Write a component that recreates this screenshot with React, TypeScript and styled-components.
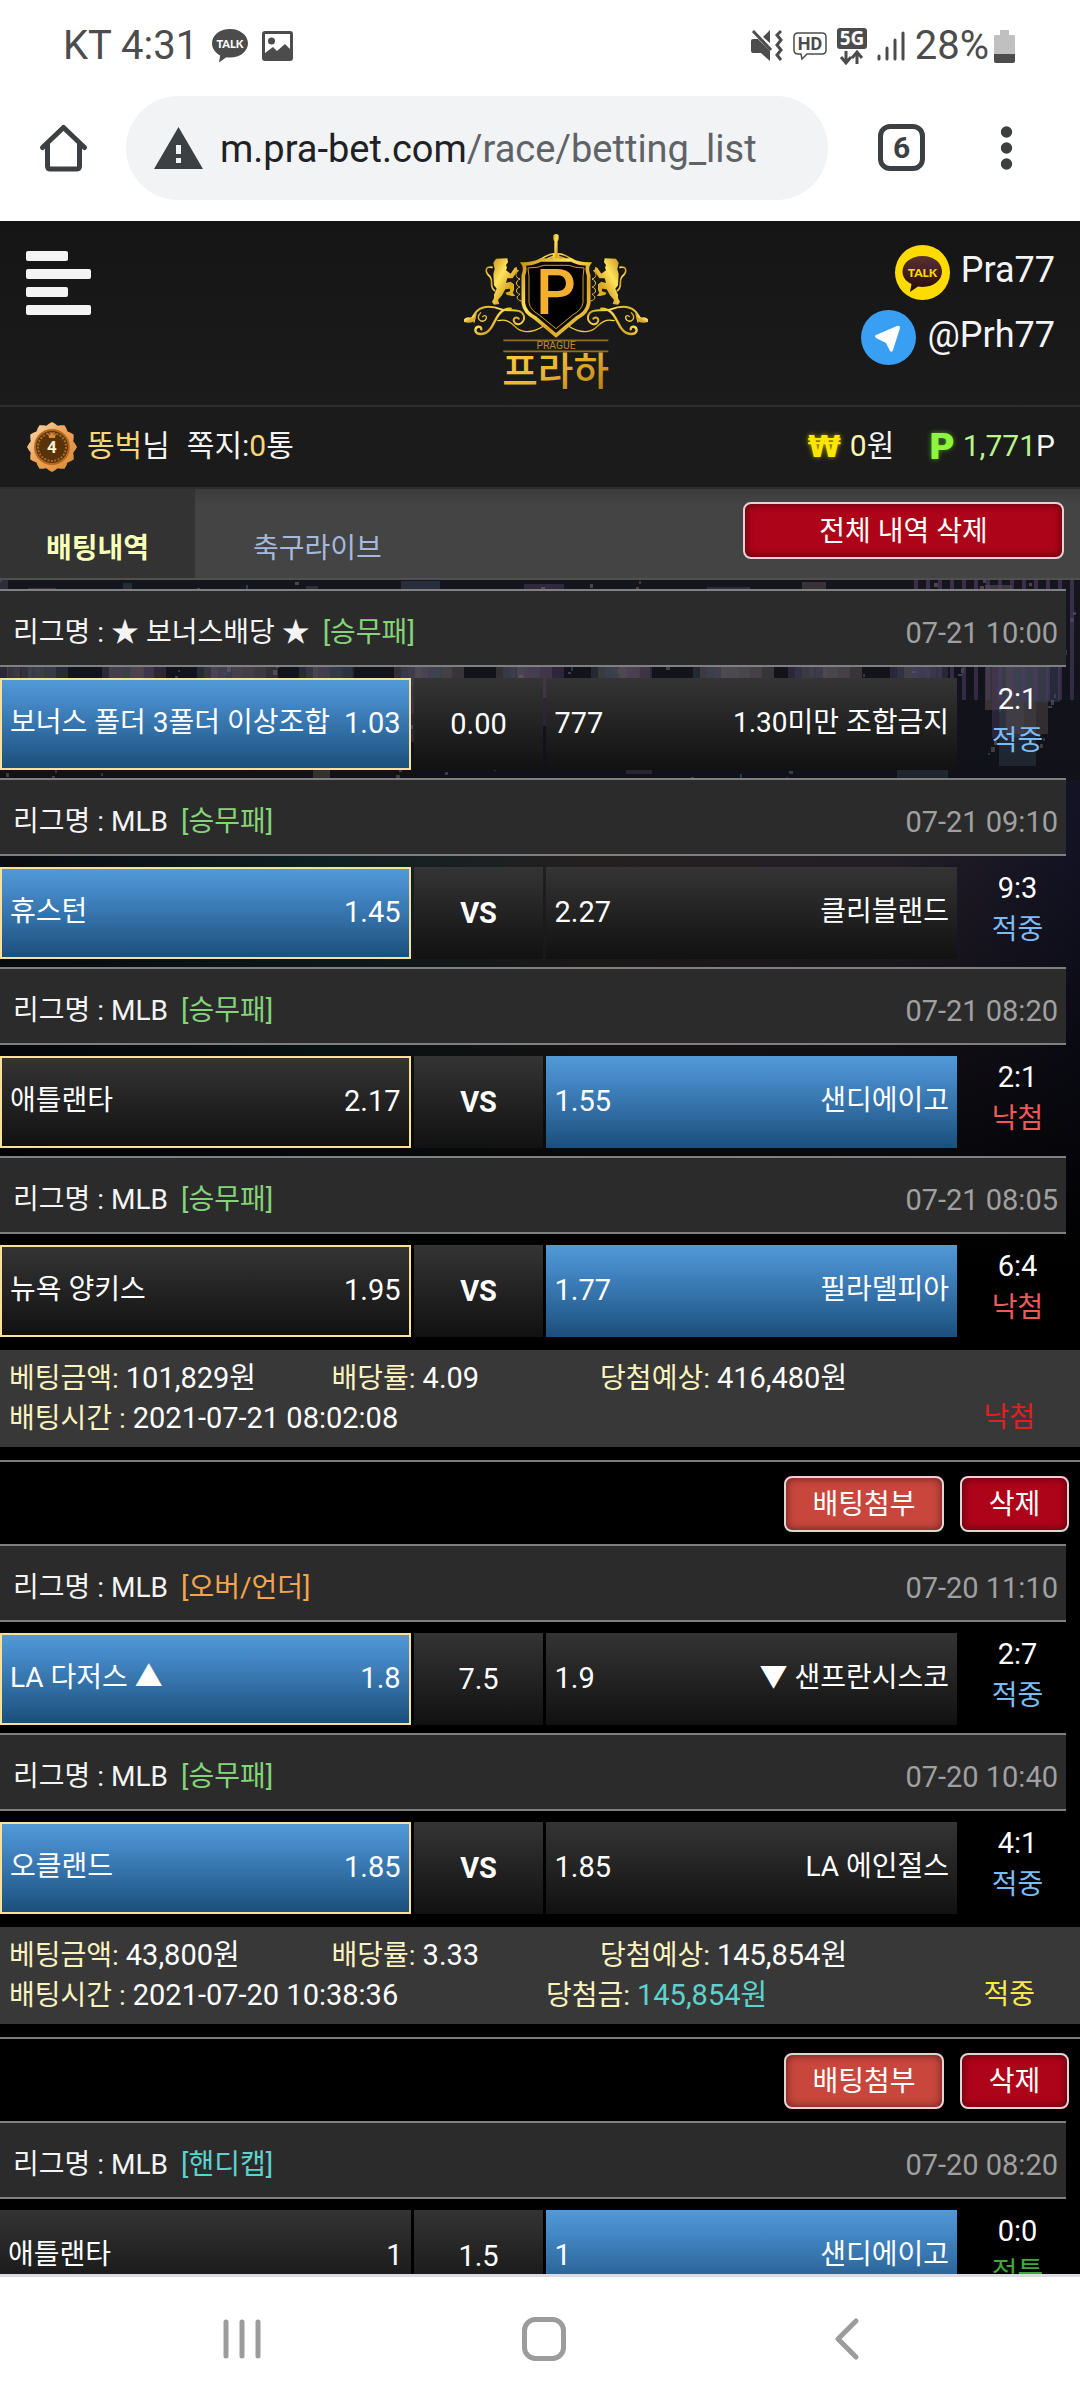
import React from "react";
import styled, { createGlobalStyle, css } from "styled-components";

const GlobalStyle = createGlobalStyle`
  * { box-sizing: border-box; }
  body { margin: 0; background: #fff; }
  body, button { font-family: Roboto, "Noto Sans CJK KR", sans-serif; }
  button { margin: 0; padding: 0; border: 0; background: none; cursor: pointer; }
  a { text-decoration: none; }
  svg { display: block; flex: none; overflow: visible; }
`;

/* ---------- shell ---------- */

const Screen = styled.div`
  display: flex;
  flex-direction: column;
  height: 100vh;
  overflow: hidden;
`;

const StatusBar = styled.div`
  display: flex;
  align-items: center;
  justify-content: space-between;
  height: 92px;
  padding: 0 65px 0 63px;
  color: #4c4c4c;
  font-size: 40px;
  line-height: 44px;
`;

const StatusGroup = styled.div<{ $gap: number }>`
  display: flex;
  align-items: center;
  gap: ${(p) => p.$gap}px;
`;

const BrowserBar = styled.div`
  display: flex;
  align-items: center;
  height: 129px;
  padding: 0 67px 18px 39px;
  color: #3c4043;
`;

const IconButton = styled.button`
  display: grid;
  place-items: center;
  flex: none;
  color: inherit;
`;

const Address = styled.button`
  display: flex;
  align-items: center;
  gap: 17px;
  flex: 1;
  height: 104px;
  margin: 0 50px 0 38px;
  padding: 0 28px;
  border-radius: 52px;
  background: #f1f3f4;
  color: #5f6368;
  font-size: 38px;
  line-height: 46px;
  text-align: left;
`;

const Url = styled.span`
  padding-top: 3px;
`;

const Host = styled.span`
  color: #202124;
`;

const TabCount = styled.button`
  flex: none;
  width: 47px;
  height: 47px;
  margin-right: 75px;
  border: 5px solid #3c4043;
  border-radius: 12px;
  color: #3c4043;
  font-size: 30px;
  font-weight: 700;
  line-height: 36px;
`;

const NavBar = styled.nav`
  display: flex;
  align-items: center;
  justify-content: space-between;
  flex: none;
  height: 126px;
  padding: 0 220px;
  border-top: 3px solid #dcdae2;
  background: #fff;
  color: #9c9c9c;
`;

/* ---------- site header ---------- */

const Page = styled.div`
  flex: 1;
  min-height: 0;
  overflow: hidden;
  background: #000;
  color: #fff;
`;

const SiteHeader = styled.header`
  display: grid;
  grid-template-columns: 518fr auto 482fr;
  align-items: start;
  height: 186px;
  border-bottom: 2px solid #2e2e2e;
  background: linear-gradient(#151515, #1b1b1b);
`;

const MenuButton = styled.button`
  display: flex;
  flex-direction: column;
  align-items: flex-start;
  gap: 8px;
  justify-self: start;
  margin: 30px 0 0 26px;
`;

const MenuLine = styled.span<{ $wide?: boolean }>`
  width: ${(p) => (p.$wide ? 65 : 42)}px;
  height: 10px;
  border-radius: 2px;
  background: #f4f4f4;
`;

const LogoLink = styled.a`
  margin-top: 11px;
`;

const Contacts = styled.div`
  display: flex;
  flex-direction: column;
  align-items: flex-end;
  gap: 10px;
  padding: 24px 25px 0 0;
`;

const Contact = styled.a`
  display: flex;
  gap: 11px;
  color: #f4f4f4;
  font-size: 36px;
  line-height: 50px;
`;

const UserBar = styled.div`
  display: flex;
  align-items: center;
  justify-content: space-between;
  height: 82px;
  padding: 0 25px 0 26px;
  border-bottom: 2px solid #2d2d2d;
  background: #1b1b1b;
  font-size: 30px;
  line-height: 40px;
  color: #f4f4f4;
`;

const UserPart = styled.div<{ $gap: number }>`
  display: flex;
  align-items: center;
  gap: ${(p) => p.$gap}px;
`;

const UserText = styled.span`
  padding-bottom: 2px;
`;

const Tint = styled.span<{ $c: string }>`
  color: ${(p) => p.$c};
`;

const WonMark = styled.b`
  color: #ffe600;
  font-family: "DejaVu Sans", sans-serif;
  text-shadow: 0 0 5px #a89a00;
  margin-right: 9px;
`;

const PointMark = styled.b`
  color: #8cf53c;
  font-family: "DejaVu Sans", sans-serif;
  font-size: 36px;
  text-shadow: 0 0 5px #4d9a1c;
  margin: 0 8px 0 34px;
`;

const TabBar = styled.div`
  display: flex;
  align-items: flex-start;
  height: 91px;
  border-bottom: 2px solid #505050;
  background: linear-gradient(#3c3c3c, #444 16px);
`;

const Tab = styled.a<{ $active?: boolean }>`
  height: 89px;
  padding: ${(p) => (p.$active ? "0 46px" : "0 58px")};
  background: ${(p) => (p.$active ? "#333" : "transparent")};
  color: ${(p) => (p.$active ? "#f7ffb8" : "#a6b9dc")};
  font-size: 28px;
  font-weight: ${(p) => (p.$active ? 700 : 400)};
  line-height: 120px;
`;

const redFace = css`
  padding-top: 2px;
  border: 2px solid #e3d3d6;
  border-radius: 8px;
  color: #fff;
  font-size: 28px;
  line-height: 40px;
  box-shadow: inset 0 0 8px rgba(0, 0, 0, 0.55);
`;

const ClearAll = styled.button`
  ${redFace}
  width: 321px;
  height: 57px;
  margin: 13px 16px 0 auto;
  background: #ae0419;
`;

/* ---------- bet list ---------- */

const List = styled.main`
  position: relative;
  padding-top: 9px;
`;

const Backdrop = styled.svg`
  position: absolute;
  top: 0;
  left: 0;
  width: 100%;
  height: 690px;
`;

const Slip = styled.section`
  position: relative;
`;

const SlipActions = styled.div`
  display: flex;
  justify-content: flex-end;
  gap: 16px;
  height: 84px;
  margin-top: 13px;
  padding: 14px 11px 0 0;
  border-top: 2px solid #7c7c7c;
`;

const SmallButton = styled.button<{ $attach?: boolean }>`
  ${redFace}
  width: ${(p) => (p.$attach ? 160 : 109)}px;
  height: 56px;
  background: ${(p) => (p.$attach ? "#c8463c" : "#ae0419")};
`;

const League = styled.div`
  display: flex;
  justify-content: space-between;
  height: 78px;
  margin-right: 14px;
  padding: 8px 8px 0 13px;
  border-top: 2px solid #808080;
  border-bottom: 2px solid #808080;
  background: #2b2b2b;
  color: #f4f4f4;
  font-size: 28px;
  line-height: 68px;
`;

const Kind = styled.span<{ $c: string }>`
  margin-left: 13px;
  color: ${(p) => p.$c};
`;

const When = styled.time`
  color: #a0a0a0;
  font-size: 29px;
`;

const Match = styled.div`
  display: grid;
  grid-template-columns: 411fr 130fr 411fr 120fr;
  gap: 3px;
  height: 92px;
  margin: 11px 0 8px;
  font-size: 28px;
`;

const Side = styled.div<{ $win?: boolean; $mine?: boolean }>`
  display: flex;
  justify-content: space-between;
  padding: 0 8px;
  border: ${(p) => (p.$mine ? "2px solid #fbe09a" : "0")};
  background: ${(p) =>
    p.$win
      ? "linear-gradient(#5199d8, #4488c6 25%, #1b4f7c)"
      : "linear-gradient(#343434, #111)"};
  line-height: ${(p) => (p.$mine ? 86 : 90)}px;
`;

const Figure = styled.span`
  font-size: 29px;
`;

const Middle = styled.div<{ $bold: boolean }>`
  background: linear-gradient(#343434, #111);
  font-size: 29px;
  font-weight: ${(p) => (p.$bold ? 700 : 400)};
  line-height: 92px;
  text-align: center;
`;

const Score = styled.div`
  display: flex;
  flex-direction: column;
  align-items: center;
  padding-right: 5px;
  line-height: 42px;
`;

const Summary = styled.div`
  height: 97px;
  margin-top: 13px;
  padding: 8px 9px 0;
  background: #383838;
  font-size: 28px;
  line-height: 40px;
`;

const SummaryRow = styled.div<{ $cols: string }>`
  display: grid;
  grid-template-columns: ${(p) => p.$cols};
  height: 40px;
  white-space: nowrap;
`;

const Verdict = styled.span<{ $c: string }>`
  justify-self: end;
  margin-right: 36px;
  color: ${(p) => p.$c};
`;

/* ---------- data ---------- */

const GREEN = "#84d478";
const ORANGE = "#f3a44c";
const CYAN = "#5ed2cf";
const HIT = "#7cbcf5";
const MISS = "#ee5a5a";

type Game = {
  league: string;
  kind: string;
  kindColor: string;
  at: string;
  home: [string, string];
  mid: string;
  away: [string, string];
  winner: "home" | "away";
  mine?: boolean;
  score: string;
  result: string;
  resultColor: string;
};

const game = (
  league: string, kind: string, kindColor: string, at: string,
  home: [string, string], mid: string, away: [string, string],
  winner: "home" | "away", score: string, result: string, resultColor: string, mine = true,
): Game => ({ league, kind, kindColor, at, home, mid, away, winner, mine, score, result, resultColor });

type Bet = {
  games: Game[];
  total?: { stake: string; odds: string; expected: string; time: string; paid?: string; verdict: string; color: string };
};

const bets: Bet[] = [
  {
    games: [
      game("★ 보너스배당 ★", "승무패", GREEN, "07-21 10:00", ["보너스 폴더 3폴더 이상조합", "1.03"], "0.00", ["777", "1.30미만 조합금지"], "home", "2:1", "적중", HIT),
      game("MLB", "승무패", GREEN, "07-21 09:10", ["휴스턴", "1.45"], "VS", ["2.27", "클리블랜드"], "home", "9:3", "적중", HIT),
      game("MLB", "승무패", GREEN, "07-21 08:20", ["애틀랜타", "2.17"], "VS", ["1.55", "샌디에이고"], "away", "2:1", "낙첨", MISS),
      game("MLB", "승무패", GREEN, "07-21 08:05", ["뉴욕 양키스", "1.95"], "VS", ["1.77", "필라델피아"], "away", "6:4", "낙첨", MISS),
    ],
    total: { stake: "101,829원", odds: "4.09", expected: "416,480원", time: "2021-07-21 08:02:08", verdict: "낙첨", color: "#e02020" },
  },
  {
    games: [
      game("MLB", "오버/언더", ORANGE, "07-20 11:10", ["LA 다저스 ▲", "1.8"], "7.5", ["1.9", "▼ 샌프란시스코"], "home", "2:7", "적중", HIT),
      game("MLB", "승무패", GREEN, "07-20 10:40", ["오클랜드", "1.85"], "VS", ["1.85", "LA 에인절스"], "home", "4:1", "적중", HIT),
    ],
    total: { stake: "43,800원", odds: "3.33", expected: "145,854원", time: "2021-07-20 10:38:36", paid: "145,854원", verdict: "적중", color: "#fbe84a" },
  },
  {
    games: [
      game("MLB", "핸디캡", CYAN, "07-20 08:20", ["애틀랜타", "1"], "1.5", ["1", "샌디에이고"], "away", "0:0", "적특", "#3fa83a", false),
    ],
  },
];

/* ---------- drawings ---------- */

const ChatIcon = () => (
  <svg width="36" height="34" viewBox="0 0 36 34">
    <path fill="currentColor" d="M18 0C8 0 0 6 0 14.300c0 5.200 3.300 9.700 8.200 12.200L7 33.500l7.300-5.200c1.200.2 2.400.3 3.700.3 10 0 18-6.300 18-14.300S28 0 18 0z" />
    <text x="18" y="19" textAnchor="middle" fontFamily="Lato, sans-serif" fontWeight="900" fontSize="11" fill="#fff">TALK</text>
  </svg>
);

const PhotoIcon = () => (
  <svg width="31" height="30" viewBox="0 0 31 30">
    <path fill="currentColor" fillRule="evenodd" d="M3 0h25a3 3 0 0 1 3 3v24a3 3 0 0 1-3 3H3a3 3 0 0 1-3-3V3a3 3 0 0 1 3-3zm0 3v19l8-6 4 4 8-7 5 5V3z" />
    <circle cx="9.500" cy="10" r="3.500" fill="currentColor" />
  </svg>
);

const MuteIcon = () => (
  <svg width="32" height="32" viewBox="0 0 32 32" fill="currentColor">
    <path d="M0 11q0-2 2-2h5l12 12v10l-9-8H2q-2 0-2-2zM12 7l7-7v13z" />
    <path d="M2 1l18 19M30 1l-4 4 4 5-4 5 4 5-4 5 4 5" fill="none" stroke="currentColor" strokeWidth="3" />
  </svg>
);

const HdIcon = () => (
  <svg width="34" height="28" viewBox="0 0 34 28">
    <path d="M5 1h24q4 0 4 4v13q0 4-4 4H14l-5 5-1-5H5q-4 0-4-4V5q0-4 4-4z" fill="none" stroke="currentColor" strokeWidth="1.500" />
    <text x="17" y="18" textAnchor="middle" fontFamily="Roboto, sans-serif" fontWeight="700" fontSize="18" fill="currentColor">HD</text>
  </svg>
);

const FiveGIcon = () => (
  <svg width="30" height="37" viewBox="0 0 30 37">
    <rect width="30" height="21" rx="3" fill="currentColor" />
    <text x="15" y="17" textAnchor="middle" fontFamily="Open Sans, sans-serif" fontWeight="700" fontSize="19" fill="#fff">5G</text>
    <path d="M9 23v11M4 29l5 6 5-6M20 36V24M15 30l5-6 5 6" fill="none" stroke="currentColor" strokeWidth="3" />
  </svg>
);

const SignalIcon = () => (
  <svg width="28" height="30" viewBox="0 0 28 30" stroke="currentColor" strokeWidth="3" strokeLinecap="round">
    <path d="M2 25v3M10 17v11M18 9v19M26 2v26" />
  </svg>
);

const BatteryIcon = () => (
  <svg width="21" height="33" viewBox="0 0 21 33">
    <path fill="#c0c0c0" d="M6 0h9v5h5q1 0 1 1v18H0V6q0-1 1-1h5z" />
    <path fill="currentColor" d="M0 24h21v7q0 2-2 2H2q-2 0-2-2z" />
  </svg>
);

const HomeIcon = () => (
  <svg width="49" height="48" viewBox="0 0 49 48" fill="none" stroke="currentColor" strokeWidth="5" strokeLinecap="round" strokeLinejoin="round">
    <path d="M3.500 23.500l21-20 21 20M8.500 20v22q0 3 3 3h26q3 0 3-3V20" />
  </svg>
);

const WarningIcon = () => (
  <svg width="49" height="42" viewBox="0 0 49 42">
    <path fill="#3c4043" d="M24.500 0L49 42H0z" />
    <path fill="#f1f3f4" d="M22 18h5v9h-5zM22 31h5v5h-5z" />
  </svg>
);

const DotsIcon = () => (
  <svg width="13" height="44" viewBox="0 0 13 44" fill="currentColor">
    <circle cx="6.500" cy="6" r="5.700" /><circle cx="6.500" cy="22" r="5.700" /><circle cx="6.500" cy="38" r="5.700" />
  </svg>
);

const KakaoIcon = () => (
  <svg width="55" height="55" viewBox="0 0 55 55">
    <defs>
      <linearGradient id="kk" x1="0" y1="0" x2="0" y2="1"><stop offset="0" stopColor="#5a3232" /><stop offset="1" stopColor="#260808" /></linearGradient>
    </defs>
    <circle cx="27.500" cy="27.500" r="27.500" fill="#fedc00" />
    <path fill="url(#kk)" d="M27.500 11C16 11 7.500 18 7.500 26.500c0 5.500 3.500 10 9 12.500L15 47l8-5.500c1.500.3 3 .4 4.500.4C39 42 47 35 47 26.500S39 11 27.500 11z" />
    <text x="27.500" y="32" textAnchor="middle" fontFamily="Lato, sans-serif" fontWeight="900" fontSize="12" fill="#fedc00">TALK</text>
  </svg>
);

const TelegramIcon = () => (
  <svg width="55" height="55" viewBox="0 0 55 55">
    <circle cx="27.500" cy="27.500" r="27.500" fill="#389ff2" />
    <path fill="#fff" d="M15 25q-2 1 0 3l10 5 4 8q2 2 3-1l7-22q0-3-3-2z" />
  </svg>
);

const MedalIcon = () => {
  const points = Array.from({ length: 48 }, (_, i) => {
    const a = (i / 48) * Math.PI * 2;
    const r = 23.500 + 1.500 * Math.cos(a * 12);
    return `${26 + r * Math.sin(a)},${26 - r * Math.cos(a)}`;
  }).join(" ");
  return (
    <svg width="52" height="52" viewBox="0 0 52 52">
      <defs>
        <linearGradient id="md" x1="0" y1="0" x2="1" y2="1"><stop offset="0" stopColor="#fbe0b8" /><stop offset=".45" stopColor="#eda45a" /><stop offset="1" stopColor="#d98630" /></linearGradient>
      </defs>
      <polygon points={points} fill="url(#md)" />
      <circle cx="26" cy="26" r="17" fill="#5a3208" stroke="#b06a20" strokeWidth="2" />
      <circle cx="26" cy="26" r="14" fill="none" stroke="#a86c2c" strokeWidth="2" strokeDasharray="2 1.500" />
      <path d="M22 12l2 2 2-3 2 3 2-2-1 5h-6z" fill="#d98a3a" />
      <text x="26" y="32" textAnchor="middle" fontFamily="Roboto, sans-serif" fontWeight="700" fontSize="17" fill="#fff0d0">4</text>
    </svg>
  );
};

/* One supporter of the crest: a rampant lion standing on scroll work. */
const Supporter = () => (
  <g>
    <path fill="url(#gold)" d="M140 100l34-1 2 12-6 8 3 8-3 8 14 10 12-18 6-2 2 8 4 4-6 4-12 18-16 0-4 14 14-4 10 8 0 16-4 10 8 8-10 1-16-4-4-6 14-4 0-8-14 2-10 18-12 14 4 12-16 2-6-8 6-12 0-10 8-18-8-10-2-34 4-14-4-20z" />
    <path fill="none" stroke="url(#gold)" strokeWidth="5" strokeLinecap="round" d="M136 196c-18-12-2-28-14-42c-16-14-16-32 6-28" />
    <path fill="none" stroke="url(#gold)" strokeWidth="3" d="M208 135c-12 10-10 22 4 26c-14 6-14 20 0 24c-14 4-14 18 0 22c-12 6-12 16 4 20" />
    <g fill="none" stroke="url(#gold)" strokeLinecap="round">
      <path strokeWidth="6" d="M52 286c20 0 20-20 32-30c22-18 50-12 72-4s46-4 62 10c16 20-4 42-20 32c-12-12 2-24 10-14" />
      <path strokeWidth="7" d="M184 250c-40 0-44 40-62 62c-14 18-40 18-44 4c0-14 18-16 18-4" />
      <path strokeWidth="4" d="M94 262c-16 16 0 32 14 22c8-10-2-18-8-10M74 290l6-26M146 286c30-6 40 8 56 22c24 20 60 10 90-12" />
    </g>
    <path fill="url(#gold)" d="M44 282q8-10 24-4l14-12-6 18q-8 12-32 6z" />
  </g>
);

const Logo = () => (
  <svg width="200" height="160" viewBox="20 20 600 480" role="img" aria-label="PRAGUE 프라하">
    <defs>
      <linearGradient id="gold" x1="0" y1="0" x2="1" y2="1">
        <stop offset="0" stopColor="#c8901e" /><stop offset=".35" stopColor="#ffe45c" /><stop offset=".65" stopColor="#d8a226" /><stop offset="1" stopColor="#f6d850" />
      </linearGradient>
      <linearGradient id="goldText" x1="0" y1="0" x2="1" y2="1">
        <stop offset="0" stopColor="#ffd640" /><stop offset=".5" stopColor="#ecb432" /><stop offset="1" stopColor="#a87410" />
      </linearGradient>
    </defs>
    <Supporter />
    <g transform="translate(640 0) scale(-1 1)"><Supporter /></g>
    <path fill="none" stroke="url(#gold)" strokeWidth="5" d="M274 102q46-34 94 0M294 100q26-12 54 0" />
    <path fill="url(#gold)" d="M312 30q8-8 16 0v12l-3 6v36h5v34h-20V84h5V48l-3-6z" />
    <path fill="#100c04" stroke="url(#gold)" strokeWidth="11" d="M222 116q30 0 52-12h92q20 12 52 12q-8 12 0 34v84q-4 28-36 44l-62 52-62-52q-32-16-36-44v-84q8-22 0-34z" />
    <path fill="#000" stroke="#c89a2c" strokeWidth="3" d="M236 128q30 0 48-8h74q20 8 46 8l-3 26v78q-4 22-30 36l-51 42-51-42q-26-14-30-36v-78z" />
    <text x="320" y="267" textAnchor="middle" fontFamily="Roboto, sans-serif" fontWeight="500" fontSize="188" fill="#f4ae30">P</text>
    <path stroke="#8f6f20" strokeWidth="5" d="M162 345h315M162 378h315" />
    <text x="320" y="372" textAnchor="middle" fontFamily="Roboto, sans-serif" fontSize="31" fill="#c08a2c">PRAGUE</text>
    <text x="319" y="480" textAnchor="middle" fontFamily="Noto Sans CJK KR, sans-serif" fontWeight="500" fontSize="116" fill="url(#goldText)">프라하</text>
  </svg>
);

const hues = ["#4a4458", "#3b4860", "#5c5050", "#34444f", "#4e3c60", "#645c5c"];

/* Dimmed night skyline that shows through between the rows. */
const City = () => (
  <Backdrop viewBox="0 0 1080 690" preserveAspectRatio="none" aria-hidden="true">
    <defs>
      <linearGradient id="fade" x1="0" y1="0" x2="0" y2="1">
        <stop offset="0" stopColor="#000" stopOpacity="0" /><stop offset=".4" stopColor="#000" stopOpacity=".2" /><stop offset="1" stopColor="#000" />
      </linearGradient>
      <linearGradient id="water" x1="0" y1="0" x2="1" y2="0">
        <stop offset="0" stopColor="#0c1016" /><stop offset=".3" stopColor="#13282d" /><stop offset=".55" stopColor="#2e2828" /><stop offset=".82" stopColor="#2c2630" /><stop offset="1" stopColor="#17162b" />
      </linearGradient>
    </defs>
    <rect width="1080" height="690" fill="#14151d" />
    <rect y="200" width="1080" height="490" fill="url(#water)" />
    {Array.from({ length: 60 }, (_, i) => (
      <rect key={i} x={(i * 197) % 1080} y={(i * 37) % 60} width={8 + ((i * 13) % 46)} height={150 - ((i * 29) % 60)} fill={hues[i % 6]} opacity=".5" />
    ))}
    {Array.from({ length: 260 }, (_, i) => (
      <rect key={i} x={(i * 131) % 1078} y={(i * 67) % 205} width={2 + (i % 3)} height={2 + (i % 4)} fill={i % 3 ? "#6b656c" : "#3f5a7c"} opacity=".6" />
    ))}
    {Array.from({ length: 14 }, (_, i) => (
      <rect key={i} x={914 + i * 12} y="0" width="4" height="120" fill="#54406c" opacity=".6" />
    ))}
    <rect width="1080" height="690" fill="url(#fade)" />
  </Backdrop>
);

/* ---------- parts ---------- */

const LABEL = "#fbf3be";

const GameRow = ({ g }: { g: Game }) => (
  <>
    <League>
      <span>리그명 : {g.league}<Kind $c={g.kindColor}>[{g.kind}]</Kind></span>
      <When>{g.at}</When>
    </League>
    <Match>
      <Side $win={g.winner === "home"} $mine={g.mine}>
        <span>{g.home[0]}</span>
        <Figure>{g.home[1]}</Figure>
      </Side>
      <Middle $bold={g.mid === "VS"}>{g.mid}</Middle>
      <Side $win={g.winner === "away"}>
        <Figure>{g.away[0]}</Figure>
        <span>{g.away[1]}</span>
      </Side>
      <Score>
        <Figure>{g.score}</Figure>
        <Tint $c={g.resultColor}>{g.result}</Tint>
      </Score>
    </Match>
  </>
);

export default function App() {
  return (
    <Screen>
      <GlobalStyle />
      <StatusBar>
        <StatusGroup $gap={14}>
          <span>KT 4:31</span>
          <ChatIcon />
          <PhotoIcon />
        </StatusGroup>
        <StatusGroup $gap={10}>
          <MuteIcon />
          <HdIcon />
          <FiveGIcon />
          <SignalIcon />
          <StatusGroup $gap={5}>
            <span>28%</span>
            <BatteryIcon />
          </StatusGroup>
        </StatusGroup>
      </StatusBar>

      <BrowserBar>
        <IconButton aria-label="Home"><HomeIcon /></IconButton>
        <Address>
          <WarningIcon />
          <Url><Host>m.pra-bet.com</Host>/race/betting_list</Url>
        </Address>
        <TabCount aria-label="6 tabs">6</TabCount>
        <IconButton aria-label="More"><DotsIcon /></IconButton>
      </BrowserBar>

      <Page>
        <SiteHeader>
          <MenuButton aria-label="메뉴">
            <MenuLine /><MenuLine $wide /><MenuLine /><MenuLine $wide />
          </MenuButton>
          <LogoLink href="#home"><Logo /></LogoLink>
          <Contacts>
            <Contact href="#kakao"><KakaoIcon />Pra77</Contact>
            <Contact href="#telegram"><TelegramIcon />@Prh77</Contact>
          </Contacts>
        </SiteHeader>

        <UserBar>
          <UserPart $gap={9}>
            <MedalIcon />
            <UserPart $gap={17}>
              <UserText><Tint $c="#fbd675">똥벅</Tint>님</UserText>
              <UserText>쪽지:<Tint $c="#fbd675">0</Tint>통</UserText>
            </UserPart>
          </UserPart>
          <UserPart $gap={0}>
            <WonMark>₩</WonMark>
            <UserText><Tint $c="#fdf6a8">0</Tint>원</UserText>
            <PointMark>P</PointMark>
            <UserText><Tint $c="#b9f58c">1,771</Tint>P</UserText>
          </UserPart>
        </UserBar>

        <TabBar>
          <Tab href="#bets" $active>배팅내역</Tab>
          <Tab href="#live">축구라이브</Tab>
          <ClearAll>전체 내역 삭제</ClearAll>
        </TabBar>

        <List>
          <City />
          {bets.map((bet, i) => (
            <Slip key={i}>
              {i > 0 && (
                <SlipActions>
                  <SmallButton $attach>배팅첨부</SmallButton>
                  <SmallButton>삭제</SmallButton>
                </SlipActions>
              )}
              {bet.games.map((g) => <GameRow key={g.at} g={g} />)}
              {bet.total && (
                <Summary>
                  <SummaryRow $cols="322fr 268fr 470fr">
                    <span><Tint $c={LABEL}>베팅금액:</Tint> <Figure>{bet.total.stake}</Figure></span>
                    <span><Tint $c={LABEL}>배당률:</Tint> <Figure>{bet.total.odds}</Figure></span>
                    <span><Tint $c={LABEL}>당첨예상:</Tint> <Figure>{bet.total.expected}</Figure></span>
                  </SummaryRow>
                  <SummaryRow $cols="536fr 400fr 124fr">
                    <span><Tint $c={LABEL}>배팅시간 :</Tint> <Figure>{bet.total.time}</Figure></span>
                    <span>
                      {bet.total.paid && <><Tint $c={LABEL}>당첨금:</Tint> <Tint $c={CYAN}><Figure>{bet.total.paid}</Figure></Tint></>}
                    </span>
                    <Verdict $c={bet.total.color}>{bet.total.verdict}</Verdict>
                  </SummaryRow>
                </Summary>
              )}
            </Slip>
          ))}
        </List>
      </Page>

      <NavBar>
        <IconButton aria-label="Recent apps">
          <svg width="44" height="40" viewBox="0 0 44 40" stroke="currentColor" strokeWidth="5" strokeLinecap="round">
            <path d="M6 3v34M22 3v34M38 3v34" />
          </svg>
        </IconButton>
        <IconButton aria-label="Home screen">
          <svg width="44" height="44" viewBox="0 0 44 44">
            <rect x="2.500" y="2.500" width="39" height="39" rx="11" fill="none" stroke="currentColor" strokeWidth="5" />
          </svg>
        </IconButton>
        <IconButton aria-label="Back">
          <svg width="36" height="42" viewBox="0 0 36 42" fill="none" stroke="currentColor" strokeWidth="5" strokeLinecap="round" strokeLinejoin="round">
            <path d="M32 3L14 21l18 18" />
          </svg>
        </IconButton>
      </NavBar>
    </Screen>
  );
}
